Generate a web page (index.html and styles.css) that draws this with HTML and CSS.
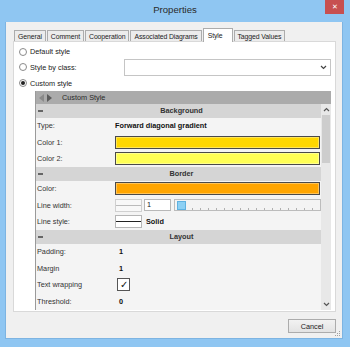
FILE: index.html
```html
<!DOCTYPE html>
<html lang="en">
<head>
    <meta charset="UTF-8">
    <title>Properties</title>
    <link rel="stylesheet" href="styles.css">
</head>
<body>
<div class="window">
    <div class="titlebar">
        <span class="title">Properties</span>
        <span class="close">✕</span>
    </div>
    <div class="client">
        <div class="tabs">
            <div class="tab">General</div>
            <div class="tab">Comment</div>
            <div class="tab">Cooperation</div>
            <div class="tab">Associated Diagrams</div>
            <div class="tab active">Style</div>
            <div class="tab">Tagged Values</div>
        </div>
        <div class="panel">
            <label class="choice first"><span class="radio"></span>Default style</label>
            <label class="choice by-class"><span class="radio"></span>Style by class:
                <span class="select"><svg width="7" height="5" viewBox="0 0 7 5"><path d="M1 1 L3.5 3.5 L6 1" fill="none" stroke="#444" stroke-width="1.2"/></svg></span>
            </label>
            <label class="choice"><span class="radio on"></span>Custom style</label>

            <div class="grid">
                <div class="grid-head">
                    <svg width="14" height="8" viewBox="0 0 14 8"><path d="M0 4 L5 0 L5 8 Z" fill="#8a8a8a"/><path d="M8 0 L13 4 L8 8 Z" fill="#5c5c5c"/></svg>
                    <span>Custom Style</span>
                </div>
                <div class="grid-body">
                    <div class="rows">
                        <div class="cat"><span class="minus"></span>Background</div>
                        <div class="row"><span class="key">Type:</span><b class="val">Forward diagonal gradient</b></div>
                        <div class="row"><span class="key">Color 1:</span><span class="swatch gold"></span></div>
                        <div class="row"><span class="key">Color 2:</span><span class="swatch lemon"></span></div>
                        <div class="cat"><span class="minus"></span>Border</div>
                        <div class="row"><span class="key">Color:</span><span class="swatch orange"></span></div>
                        <div class="row">
                            <span class="key">Line width:</span>
                            <span class="preview faint"></span>
                            <span class="spin">1</span>
                            <span class="slider"><span class="thumb"></span></span>
                        </div>
                        <div class="row"><span class="key">Line style:</span><span class="preview"></span><b class="val">Solid</b></div>
                        <div class="cat"><span class="minus"></span>Layout</div>
                        <div class="row"><span class="key">Padding:</span><b class="val num">1</b></div>
                        <div class="row"><span class="key">Margin</span><b class="val num">1</b></div>
                        <div class="row"><span class="key">Text wrapping</span><span class="check">✓</span></div>
                        <div class="row"><span class="key">Threshold:</span><b class="val num">0</b></div>
                    </div>
                    <div class="scrollbar">
                        <span class="arrow"><svg width="7" height="5" viewBox="0 0 7 5"><path d="M1 4 L3.5 1.5 L6 4" fill="none" stroke="#555" stroke-width="1.2"/></svg></span>
                        <span class="bar"></span>
                        <span class="track"></span>
                        <span class="arrow"><svg width="7" height="5" viewBox="0 0 7 5"><path d="M1 1 L3.5 3.5 L6 1" fill="none" stroke="#555" stroke-width="1.2"/></svg></span>
                    </div>
                </div>
            </div>
        </div>
        <div class="footer">
            <button class="btn">Cancel</button>
            <svg class="grip" width="6" height="6" viewBox="0 0 6 6"><g fill="#a0a0a0"><rect x="4" y="0" width="1" height="1"/><rect x="2" y="2" width="1" height="1"/><rect x="4" y="2" width="1" height="1"/><rect x="0" y="4" width="1" height="1"/><rect x="2" y="4" width="1" height="1"/><rect x="4" y="4" width="1" height="1"/></g></svg>
        </div>
    </div>
</div>
</body>
</html>
```

FILE: styles.css
```css
body {
    margin: 0;
    font-family: 'Liberation Sans', Arial, sans-serif;
    color: #222;
}
.window {
    width: 350px;
    height: 347px;
    background: #8fc6f2;
    display: flex;
    flex-direction: column;
}
.titlebar {
    height: 22px;
    display: flex;
    align-items: flex-start;
}
.title {
    flex: 1;
    text-align: center;
    padding-left: 25px;
    font-size: 9.6px;
    line-height: 20px;
    color: #2b2b2b;
}
.close {
    width: 19px;
    height: 14px;
    margin-right: 6px;
    background: #c75050;
    color: #fff;
    font-size: 7px;
    line-height: 14px;
    text-align: center;
}
.client {
    margin: 0 7px 8px 5px;
    flex: 1;
    background: #f0f0f0;
    border: 1px solid #7db4e2;
    border-top: none;
    display: flex;
    flex-direction: column;
    font-size: 7.3px;
}
.tabs {
    display: flex;
    align-items: flex-end;
    height: 13px;
    margin: 6px 0 0 8px;
}
.tab {
    height: 11px;
    line-height: 11px;
    padding: 0 3px;
    margin-right: 1px;
    border: 1px solid #acacac;
    border-bottom: none;
    background: #ececec;
    box-sizing: border-box;
    color: #222;
    font-size: 6.9px;
    letter-spacing: -0.1px;
}
.tab.active {
    height: 14px;
    line-height: 14px;
    padding: 0 9px 0 4px;
    margin: 0 1px -1px 0;
    background: #fff;
    position: relative;
    z-index: 1;
}
.panel {
    margin: 0 6px 0 7px;
    height: 271px;
    box-sizing: border-box;
    background: #fff;
    border: 1px solid #d9d9d9;
    padding: 3px 4px 0 5px;
}
.choice {
    display: flex;
    align-items: center;
    height: 14px;
    color: #222;
}
.choice.first {
    height: 13px;
}
.choice.by-class {
    height: 18px;
}
.radio {
    width: 8px;
    height: 8px;
    border: 1px solid #8a8a8a;
    border-radius: 50%;
    margin-right: 3px;
    box-sizing: border-box;
    background: #fff;
    display: flex;
    align-items: center;
    justify-content: center;
}
.radio.on::after {
    content: "";
    width: 4px;
    height: 4px;
    border-radius: 50%;
    background: #222;
}
.select {
    margin-left: auto;
    width: 207px;
    height: 17px;
    box-sizing: border-box;
    border: 1px solid #c5c5c5;
    background: #fff;
    display: flex;
    align-items: center;
    justify-content: flex-end;
    padding-right: 3px;
}
.grid {
    margin: 1px 0 0 16px;
    height: 219px;
    display: flex;
    flex-direction: column;
    border-left: 1px solid #9a9a9a;
}
.grid-head {
    height: 13px;
    background: #ababab;
    display: flex;
    align-items: center;
    padding-left: 3px;
    gap: 9px;
    color: #2a2a2a;
}
.grid-body {
    flex: 1;
    display: flex;
    overflow: hidden;
}
.rows {
    flex: 1;
    background: #f4f4f4;
}
.cat {
    height: 13.5px;
    background: #d5d5d5;
    font-weight: bold;
    display: flex;
    align-items: center;
    justify-content: center;
    padding-left: 6px;
    position: relative;
    color: #333;
}
.minus {
    position: absolute;
    left: 2px;
    top: 6px;
    width: 5px;
    height: 1.5px;
    background: #666;
}
.row {
    height: 16.5px;
    display: flex;
    align-items: center;
    box-sizing: border-box;
}
.key {
    width: 78px;
    padding-left: 1px;
    color: #333;
    flex-shrink: 0;
}
.val {
    color: #111;
    font-weight: bold;
}
.val.num {
    margin-left: 4px;
}
.swatch {
    flex: 1;
    height: 13px;
    margin-right: 1px;
    box-sizing: border-box;
    border: 1px solid #4a4a4a;
    box-shadow: inset 0 0 0 1px rgba(255, 255, 255, 0.35);
}
.gold {
    background: #ffd700;
}
.lemon {
    background: #ffff55;
}
.orange {
    background: #ffa500;
}
.preview {
    width: 27px;
    height: 13px;
    margin-right: 4px;
    box-sizing: border-box;
    border: 1px solid #b5b5b5;
    background: linear-gradient(#fff 5px, #222 5px, #222 6px, #fff 6px);
}
.preview.faint {
    margin-right: 2px;
    background: linear-gradient(#f8f8f8 5px, #bbb 5px, #bbb 6px, #f8f8f8 6px);
    border-color: #d0d0d0;
}
.spin {
    width: 27px;
    height: 12px;
    box-sizing: border-box;
    border: 1px solid #b8b8b8;
    background: #fff;
    padding-left: 2px;
    line-height: 10px;
    margin-right: 3px;
}
.slider {
    flex: 1;
    height: 12px;
    box-sizing: border-box;
    border: 1px solid #bcbcbc;
    background:
        repeating-linear-gradient(90deg, transparent 0 7px, #b0b0b0 7px 8px) 10px 8px / 100% 2px no-repeat,
        #f3f3f3;
    display: flex;
    align-items: center;
    padding-left: 2px;
}
.thumb {
    width: 9px;
    height: 9px;
    background: #8cd0f4;
    border: 1px solid #5fb1e0;
    box-sizing: border-box;
}
.check {
    width: 13px;
    height: 13px;
    margin-left: 2px;
    box-sizing: border-box;
    border: 1px solid #555;
    background: #fff;
    font-size: 10px;
    line-height: 11px;
    text-align: center;
    color: #111;
}
.scrollbar {
    width: 10px;
    display: flex;
    flex-direction: column;
    background: #e8e8e8;
}
.arrow {
    height: 11px;
    display: flex;
    align-items: center;
    justify-content: center;
}
.bar {
    height: 48px;
    margin: 0 1px;
    background: #cdcdcd;
}
.track {
    flex: 1;
}
.footer {
    flex: 1;
    display: flex;
    justify-content: flex-end;
    align-items: flex-start;
    padding-top: 7px;
    position: relative;
}
.btn {
    width: 48px;
    height: 14px;
    margin-right: 6px;
    padding: 0;
    font-family: inherit;
    font-size: 7.3px;
    color: #222;
    background: linear-gradient(#f2f2f2, #e3e3e3);
    border: 1px solid #acacac;
}
.grip {
    position: absolute;
    right: 1px;
    bottom: 1px;
}
```
